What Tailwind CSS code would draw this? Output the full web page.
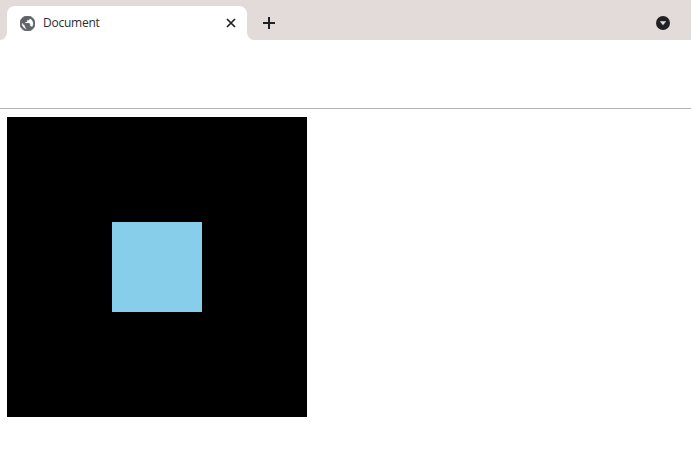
<!DOCTYPE html>
<html lang="en">
<head>
    <meta charset="UTF-8">
    <meta name="viewport" content="width=device-width, initial-scale=1.0">
    <title>Document</title>
    <script src="https://cdn.jsdelivr.net/npm/@tailwindcss/browser@4"></script>
</head>
<body class="h-[463px] w-[691px] overflow-hidden bg-white font-['Open_Sans',sans-serif]">
    <!-- Tab strip -->
    <div class="flex h-10 items-end bg-[#e3dbd9] pl-[7px]">
        <div class="relative flex h-[34px] w-[240px] items-center rounded-t-lg bg-white pl-[13px] pr-[11px]">
            <!-- flared tab corners -->
            <svg class="absolute bottom-0 left-[-7px] h-2 w-[7px]" viewBox="0 0 7 8"><path d="M7 0v8H0a7 8 0 0 0 7-8z" fill="#fff"/></svg>
            <svg class="absolute bottom-0 right-[-7px] h-2 w-[7px]" viewBox="0 0 7 8"><path d="M0 0v8h7a7 8 0 0 1-7-8z" fill="#fff"/></svg>
            <svg class="h-[15px] w-[15px] shrink-0" viewBox="2 2 20 20" fill="#5f6368" stroke="#5f6368" stroke-width="1.200">
                <path d="M12 2C6.480 2 2 6.480 2 12s4.480 10 10 10 10-4.480 10-10S17.520 2 12 2zm-1 17.930c-3.950-.49-7-3.850-7-7.930 0-.62.08-1.210.21-1.790L9 15v1c0 1.100.9 2 2 2v1.930zm6.900-2.540c-.26-.81-1-1.390-1.900-1.390h-1v-3c0-.55-.45-1-1-1H8v-2h2c.55 0 1-.45 1-1V7h2c1.100 0 2-.9 2-2v-.41c2.930 1.190 5 4.060 5 7.410 0 2.080-.8 3.970-2.100 5.390z"/>
            </svg>
            <span class="ml-2 flex-1 text-xs leading-none tracking-[-0.25px] text-[#2b2e31]">Document</span>
            <svg class="h-[10px] w-[10px] shrink-0" viewBox="0 0 10 10"><path d="M1 1l8 8M9 1l-8 8" stroke="#202124" stroke-width="1.700" fill="none"/></svg>
        </div>
        <svg class="mb-[11px] ml-[16px] h-3 w-3 shrink-0" viewBox="0 0 12 12"><path d="M6 0v12M0 6h12" stroke="#202124" stroke-width="2" fill="none"/></svg>
        <svg class="mb-[10px] ml-auto mr-[21px] h-[14px] w-[14px] shrink-0" viewBox="0 0 14 14">
            <circle cx="7" cy="7" r="7" fill="#202124"/>
            <path d="M3.800 5.200h6.400L7 9.200z" fill="#e3dbd9"/>
        </svg>
    </div>

    <!-- Toolbar -->
    <div class="h-[69px] border-b border-[#b4b4b4] bg-white"></div>

    <!-- Page -->
    <div class="pl-[7px] pt-2">
        <div class="flex h-[300px] w-[300px] items-center justify-center bg-black">
            <div class="h-[90px] w-[90px] bg-[#87ceeb]"></div>
        </div>
    </div>
</body>
</html>
